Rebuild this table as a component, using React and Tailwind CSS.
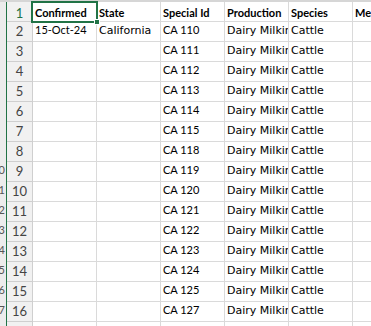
import React from 'react';

const cal = "font-['Lato',sans-serif]";
const dv = "font-['DejaVu_Sans',sans-serif]";

const ids = ['110', '111', '112', '113', '114', '115', '118', '119', '120', '121', '122', '123', '124', '125', '127'];

const header = ['Confirmed', 'State', 'Special Id', 'Production', 'Species'];

const dataRows = ids.map((id, i) => ({
  confirmed: i === 0 ? '15-Oct-24' : '',
  state: i === 0 ? 'California' : '',
  specialId: 'CA ' + id,
  production: 'Dairy Milking',
  species: 'Cattle',
}));

const Cell = ({ children, font = cal, bold = false, top = false }) => (
  <div
    className={`w-[64px] shrink-0 overflow-hidden whitespace-nowrap border-r border-b border-[#dadada] pl-[2px] text-[11px] text-black ${font} ${
      bold ? 'font-bold' : ''
    } ${top ? 'pt-[3px] leading-[16px]' : font === dv ? 'leading-[17px]' : 'leading-[16px]'}`}
  >
    {children}
  </div>
);

const RowHead = ({ n, selected }) => (
  <>
    {/* sliver of a second row header peeking in at the left edge */}
    <div className={`flex w-[6px] shrink-0 justify-end overflow-hidden bg-[#ececec] pr-[1px] text-[11px] leading-[16px] text-[#555] ${cal}`}>
      {n >= 9 ? <span className="whitespace-nowrap">{n + 1}</span> : null}
    </div>
    <div className="w-px shrink-0 bg-[#217346]" />
    <div
      className={`w-[26px] shrink-0 border-r border-b border-[#cfcfcf] bg-[#f1f1f1] text-center text-[13px] ${cal} ${
        selected ? 'pt-[2px] leading-[18px] text-[#217346]' : 'leading-[18px] text-[#444]'
      }`}
    >
      {n}
    </div>
  </>
);

const App = () => {
  return (
    <div className="relative w-[371px] h-[326px] overflow-hidden bg-white">
      <div className="h-[2px] bg-[#d6d6d6]" />

      <div className="flex h-[20px]">
        <RowHead n={1} selected />
        {header.map((h) => (
          <Cell key={h} bold top>
            {h}
          </Cell>
        ))}
        <div className={`flex-1 overflow-hidden whitespace-nowrap border-b border-[#dadada] pl-[2px] pt-[3px] text-[11px] leading-[16px] font-bold text-black ${cal}`}>
          Medication
        </div>
      </div>

      {dataRows.map((r, i) => (
        <div key={r.specialId} className="flex h-[20px]">
          <RowHead n={i + 2} />
          <Cell>{r.confirmed}</Cell>
          <Cell font={dv}>{r.state}</Cell>
          <Cell>{r.specialId}</Cell>
          <Cell font={dv}>{r.production}</Cell>
          <Cell font={dv}>{r.species}</Cell>
          <div className="flex-1 border-b border-[#dadada]" />
        </div>
      ))}

      <div className="flex h-[20px]">
        <RowHead n={17} />
        <Cell />
        <Cell />
        <Cell />
        <Cell />
        <Cell />
        <div className="flex-1 border-b border-[#dadada]" />
      </div>

      {/* active cell A1 */}
      <div className="absolute left-[31px] top-[1px] w-[67px] h-[22px] border-2 border-[#217346]" />
      <div className="absolute left-[94px] top-[19px] w-[6px] h-[6px] bg-[#217346] border border-white" />
    </div>
  );
};

export default App;
